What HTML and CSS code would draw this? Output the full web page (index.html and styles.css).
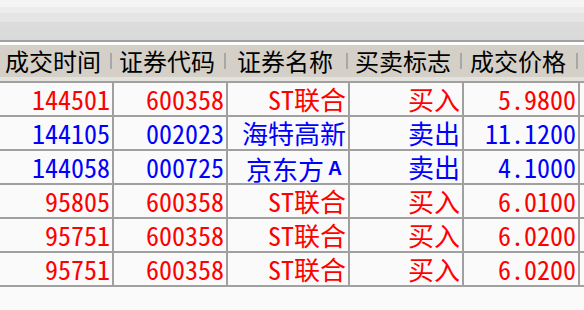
FILE: index.html
```html
<!DOCTYPE html>
<html lang="zh-CN">
<head>
<meta charset="utf-8">
<title>成交明细</title>
<link rel="stylesheet" href="styles.css">
</head>
<body>
<div class="toolbar"></div>
<div class="grid">
  <div class="thead">
    <div class="th c1"><span class="label">成交时间</span><i class="sep"></i></div>
    <div class="th c2"><span class="label">证券代码</span><i class="sep"></i></div>
    <div class="th c3"><span class="label">证券名称</span><i class="sep"></i></div>
    <div class="th c4"><span class="label">买卖标志</span><i class="sep"></i></div>
    <div class="th c5"><span class="label">成交价格</span><i class="sep"></i></div>
    <div class="th c6"></div>
  </div>
  <div class="row buy">
    <div class="td c1">144501</div><div class="td c2">600358</div><div class="td c3">ST联合</div><div class="td c4">买入</div><div class="td c5">5.9800</div><div class="td c6"></div>
  </div>
  <div class="row sell">
    <div class="td c1">144105</div><div class="td c2">002023</div><div class="td c3">海特高新</div><div class="td c4">卖出</div><div class="td c5">11.1200</div><div class="td c6"></div>
  </div>
  <div class="row sell">
    <div class="td c1">144058</div><div class="td c2">000725</div><div class="td c3">京东方<span class="fw">Ａ</span></div><div class="td c4">卖出</div><div class="td c5">4.1000</div><div class="td c6"></div>
  </div>
  <div class="row buy">
    <div class="td c1">95805</div><div class="td c2">600358</div><div class="td c3">ST联合</div><div class="td c4">买入</div><div class="td c5">6.0100</div><div class="td c6"></div>
  </div>
  <div class="row buy">
    <div class="td c1">95751</div><div class="td c2">600358</div><div class="td c3">ST联合</div><div class="td c4">买入</div><div class="td c5">6.0200</div><div class="td c6"></div>
  </div>
  <div class="row buy">
    <div class="td c1">95751</div><div class="td c2">600358</div><div class="td c3">ST联合</div><div class="td c4">买入</div><div class="td c5">6.0200</div><div class="td c6"></div>
  </div>
</div>
</body>
</html>
```
FILE: styles.css
```css
html, body {
  margin: 0;
  padding: 0;
  background: #fafafa;
  overflow: hidden;
}
body {
  font-family: "Noto Sans Mono CJK SC", "Noto Sans CJK SC", "Liberation Mono", monospace;
  width: 584px;
  height: 310px;
}
.toolbar {
  height: 40px;
  background: linear-gradient(to bottom,
    #f4f4f4 0, #f4f4f4 7px,
    #ededed 7px, #ededed 13px,
    #e5e5e5 13px, #e5e5e5 22px,
    #dcdcdc 22px, #d9d9d9 40px);
}
.grid {
  border-top: 2px solid #a0a0a0;
  padding-top: 3px;
  background: #ffffff;
}
.thead {
  display: flex;
  height: 38px;
  box-sizing: border-box;
  background: #d4d0c8;
  border-bottom: 2px solid #a0a0a0;
  box-shadow: inset 0 -4px 0 #e4e2dc;
  font-size: 24px;
  color: #000;
}
.th {
  display: flex;
  align-items: center;
  height: 32px;
  box-sizing: border-box;
}
.label {
  flex: 1;
  text-align: center;
  line-height: 32px;
  white-space: nowrap;
  padding-right: 4px;
}
.sep {
  width: 2px;
  height: 16px;
  margin-right: 2px;
  background: #a8a8a8;
}
.c1 { width: 114px; }
.c2 { width: 114px; }
.c3 { width: 122px; }
.c4 { width: 114px; }
.c5 { width: 116px; }
.c6 { flex: 1; }
.row {
  display: flex;
  height: 34px;
  box-sizing: border-box;
  background: #fafafa;
  border-bottom: 2px solid #a0a0a0;
  font-size: 26px;
}
.td {
  box-sizing: border-box;
  border-right: 2px solid #a0a0a0;
  text-align: right;
  padding-right: 2px;
  line-height: 32px;
  white-space: nowrap;
}
.td.c6 { border-right: none; }
.buy { color: #ff0000; }
.sell { color: #0000ff; }
.fw {
  font-size: 18px;
  vertical-align: 5px;
  font-weight: bold;
  padding: 0 2px;
}
```
